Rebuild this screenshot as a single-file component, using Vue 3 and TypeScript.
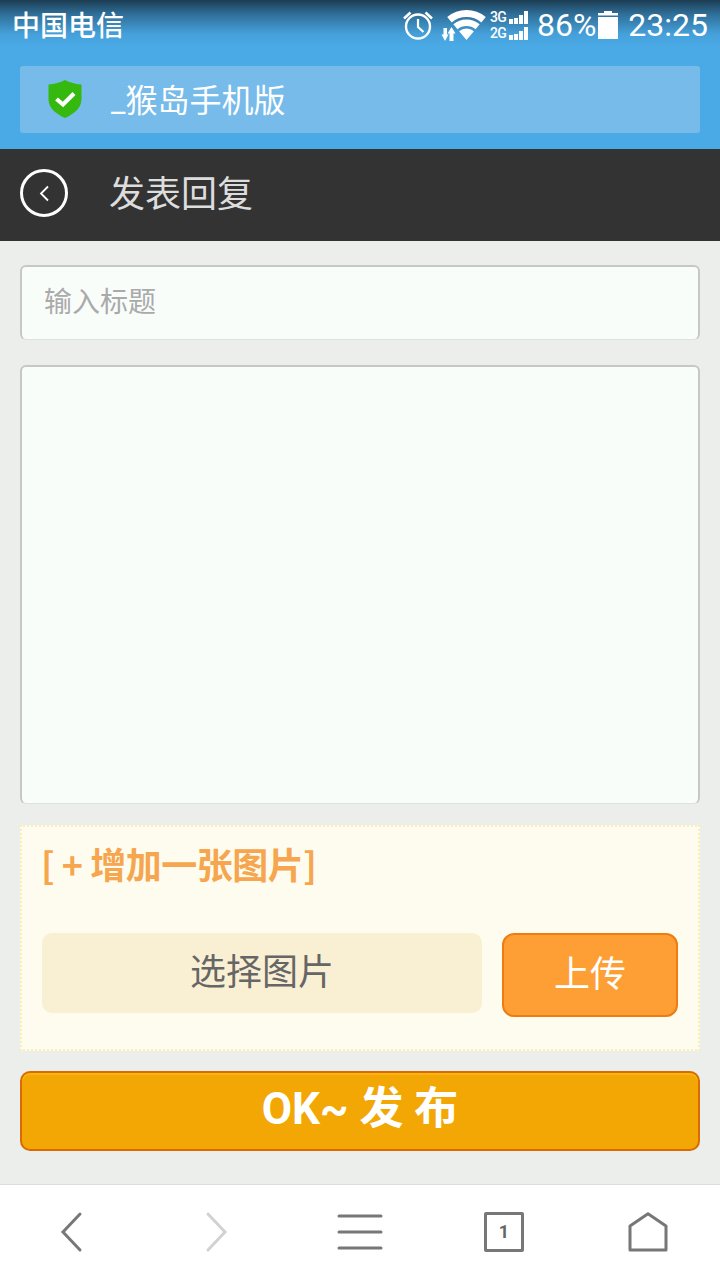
<script setup lang="ts">
import { ref } from 'vue'

const title = ref('')
const content = ref('')
</script>

<template>
  <div class="page">
    <header class="top">
      <div class="status">
        <span class="carrier">中国电信</span>
        <div class="status-right">
          <!-- 闹钟 -->
          <svg class="ic-alarm" width="32" height="30" viewBox="0 0 32 30" fill="none" stroke="#fff">
            <circle cx="16" cy="16.5" r="12" stroke-width="2.4" />
            <path d="M16 9v8l5.500 5" stroke-width="2.200" />
            <path d="M2 8.500 8.500 2.500M30 8.500 23.500 2.500" stroke-width="2.600" />
          </svg>
          <!-- wifi -->
          <svg class="ic-wifi" width="46" height="32" viewBox="0 0 46 32" fill="#fff">
            <path d="M6.200 8A30 30 0 0 1 44.800 8L40.300 13.400A23 23 0 0 0 10.700 13.400Z" />
            <path d="M12.300 15.300A20.500 20.500 0 0 1 38.700 15.300L34.500 20.300A14 14 0 0 0 16.500 20.300Z" />
            <path d="M18.100 22.200A11.500 11.500 0 0 1 32.900 22.200L25.500 31Z" />
            <path d="M2.500 19h3.500v6.500H7.500L4 32 .5 25.500H2.500Z" />
            <path d="M8.500 32V24.500H6.500L10.500 18l4 6.500H12.500V32Z" />
          </svg>
          <div class="signal">
            <div class="signal-row" v-for="net in ['3G', '2G']" :key="net">
              <span>{{ net }}</span>
              <i class="b1"></i><i class="b2"></i><i class="b3"></i><i class="b4"></i>
            </div>
          </div>
          <span class="percent">86%</span>
          <svg class="ic-batt" width="22" height="28" viewBox="0 0 22 28">
            <path d="M7 0h8v2h6v2.500H1V2h6Z" fill="#fff" />
            <rect x="1" y="6" width="20" height="22" fill="#fff" />
          </svg>
          <span class="clock">23:25</span>
        </div>
      </div>
      <div class="address">
        <svg class="ic-shield" width="34" height="38" viewBox="0 0 34 38">
          <path d="M17 0C22 2.500 27 4 33.500 4.500V19C33.500 28 26 34 17 38 8 34 .5 28 .5 19V4.500C7 4 12 2.500 17 0Z" fill="#36b90f" />
          <path d="M8.500 19 15 24.500 26 13.500" fill="none" stroke="#fff" stroke-width="4.200" />
        </svg>
        <span class="site">_猴岛手机版</span>
      </div>
    </header>

    <nav class="nav">
      <button class="back" type="button">
        <svg width="48" height="48" viewBox="0 0 48 48" fill="none" stroke="#fff">
          <circle cx="24" cy="24" r="22.500" stroke-width="3" />
          <path d="M28 17.500 21 24.500l7 7" stroke-width="1.800" />
        </svg>
      </button>
      <h1 class="nav-title">发表回复</h1>
    </nav>

    <main class="form">
      <input v-model="title" class="field title-field" type="text" placeholder="输入标题" />
      <textarea v-model="content" class="field body-field"></textarea>

      <section class="upload">
        <a class="add-more">[ + 增加一张图片]</a>
        <div class="upload-row">
          <div class="picker">选择图片</div>
          <button class="upload-btn" type="button">上传</button>
        </div>
      </section>

      <button class="submit" type="button">OK~ 发 布</button>
    </main>

    <footer class="toolbar">
      <div class="tool">
        <svg width="24" height="44" viewBox="0 0 24 44" fill="none" stroke="#777" stroke-width="3" stroke-linecap="round">
          <path d="M20 4 3 22 20 40" />
        </svg>
      </div>
      <div class="tool">
        <svg width="24" height="44" viewBox="0 0 24 44" fill="none" stroke="#d2d2d2" stroke-width="3" stroke-linecap="round">
          <path d="M4 4 21 22 4 40" />
        </svg>
      </div>
      <div class="tool">
        <svg width="46" height="38" viewBox="0 0 46 38" fill="none" stroke="#777" stroke-width="3" stroke-linecap="round">
          <path d="M2 3h42M2 19h42M2 35h42" />
        </svg>
      </div>
      <div class="tool">
        <div class="tab-count">1</div>
      </div>
      <div class="tool">
        <svg width="40" height="40" viewBox="0 0 40 40" fill="none" stroke="#777" stroke-width="3" stroke-linejoin="round">
          <path d="M2 14 20 1.800 38 14v24H2Z" />
        </svg>
      </div>
    </footer>
  </div>
</template>

<style>
html,
body {
  margin: 0;
  background: #ebeeea;
}
</style>

<style scoped>
.page {
  width: 720px;
  height: 1280px;
  display: flex;
  flex-direction: column;
  overflow: hidden;
  background: #ebeeea;
  font-family: "Noto Sans CJK SC", "Roboto", sans-serif;
}

.top {
  height: 149px;
  box-sizing: border-box;
  background: linear-gradient(180deg, #1c3d52 0, #2f6e98 14px, #45a0da 34px, #4aaae6 46px);
}

.status {
  height: 50px;
  display: flex;
  align-items: center;
  justify-content: space-between;
  padding: 0 12px 0 12px;
  color: #fff;
}

.carrier {
  font-size: 28px;
  line-height: 48px;
  padding-bottom: 2px;
  font-weight: 500;
}

.status-right {
  display: flex;
  align-items: center;
  font-family: "Roboto", sans-serif;
}

.ic-alarm {
  margin-right: 7px;
}

.signal {
  width: 38px;
  margin: 0 9px 0 3px;
  display: flex;
  flex-direction: column;
  gap: 2px;
}

.signal-row {
  height: 14px;
  display: flex;
  align-items: flex-end;
  gap: 1px;
}

.signal-row span {
  width: 18px;
  font-size: 14px;
  line-height: 14px;
  font-weight: 500;
  letter-spacing: -0.5px;
}

.signal-row i {
  width: 4px;
  background: #fff;
}

.b1 { height: 5px; }
.b2 { height: 6px; }
.b3 { height: 9px; }
.b4 { height: 13px; }

.percent,
.clock {
  font-size: 32px;
  line-height: 50px;
}

.ic-batt {
  margin: 0 9px 0 1px;
}

.address {
  height: 67px;
  margin: 16px 20px 0;
  display: flex;
  align-items: center;
  padding-left: 28px;
  border-radius: 3px;
  background: #76bbe9;
  color: #fff;
}

.ic-shield {
  flex: none;
  margin-bottom: 2px;
}

.site {
  margin-left: 29px;
  padding-bottom: 3px;
  font-family: "Roboto", "Noto Sans CJK SC", sans-serif;
  font-size: 32px;
}

.nav {
  height: 92px;
  flex: none;
  display: flex;
  align-items: center;
  padding-left: 20px;
  background: #333;
}

.back {
  padding: 0;
  margin-bottom: 4px;
  border: 0;
  background: none;
  display: flex;
}

.nav-title {
  margin: 0 0 0 41px;
  padding-bottom: 8px;
  font-size: 36px;
  font-weight: 400;
  color: #ddd;
}

.form {
  flex: 1;
  display: flex;
  flex-direction: column;
  padding: 24px 20px 0;
}

.field {
  display: block;
  box-sizing: border-box;
  width: 100%;
  border: 2px solid #c6c8c6;
  border-bottom: 1px solid #dfe3df;
  border-radius: 6px;
  background: #f9fdfa;
  outline: none;
  font-family: inherit;
  resize: none;
}

.title-field {
  height: 75px;
  padding: 0 22px 6px;
  font-size: 28px;
  color: #333;
}

.title-field::placeholder {
  color: #aaa;
  opacity: 1;
}

.body-field {
  height: 439px;
  margin-top: 25px;
}

.upload {
  height: 226px;
  box-sizing: border-box;
  margin-top: 21px;
  padding: 10px 20px 0;
  border: 2px dotted #fcedb4;
  background: #fdfcee;
}

.add-more {
  display: block;
  margin-left: -1px;
  font-size: 36px;
  line-height: 52px;
  font-weight: 700;
  color: #f6a64f;
  letter-spacing: -0.5px;
}

.upload-row {
  display: flex;
  align-items: flex-start;
  gap: 20px;
  margin-top: 44px;
}

.picker {
  width: 440px;
  height: 80px;
  border-radius: 10px;
  background: #f9f0d3;
  color: #666;
  font-size: 36px;
  line-height: 72px;
  text-align: center;
}

.upload-btn {
  width: 176px;
  height: 84px;
  padding: 0 0 8px;
  border: 2px solid #ee7c10;
  border-radius: 12px;
  background: #fe9f36;
  color: #fff;
  font-family: inherit;
  font-size: 36px;
}

.submit {
  height: 80px;
  margin-top: 20px;
  padding: 0 0 14px;
  border: 2px solid #d96a05;
  border-radius: 10px;
  background: #f2a705;
  box-shadow: inset 0 2px 0 #fbb50f;
  color: #fff;
  font-family: "Roboto", "Noto Sans CJK SC", sans-serif;
  font-size: 44px;
  font-weight: 700;
}

.toolbar {
  height: 96px;
  flex: none;
  box-sizing: border-box;
  display: grid;
  grid-template-columns: repeat(5, 1fr);
  padding-bottom: 1px;
  border-top: 1px solid #dcdedc;
  background: #fff;
}

.tool {
  display: flex;
  align-items: center;
  justify-content: center;
}

.tab-count {
  width: 40px;
  height: 40px;
  box-sizing: border-box;
  border: 3px solid #777;
  border-radius: 2px;
  color: #666;
  font-family: "Roboto", sans-serif;
  font-size: 18px;
  font-weight: 700;
  line-height: 34px;
  text-align: center;
}
</style>
